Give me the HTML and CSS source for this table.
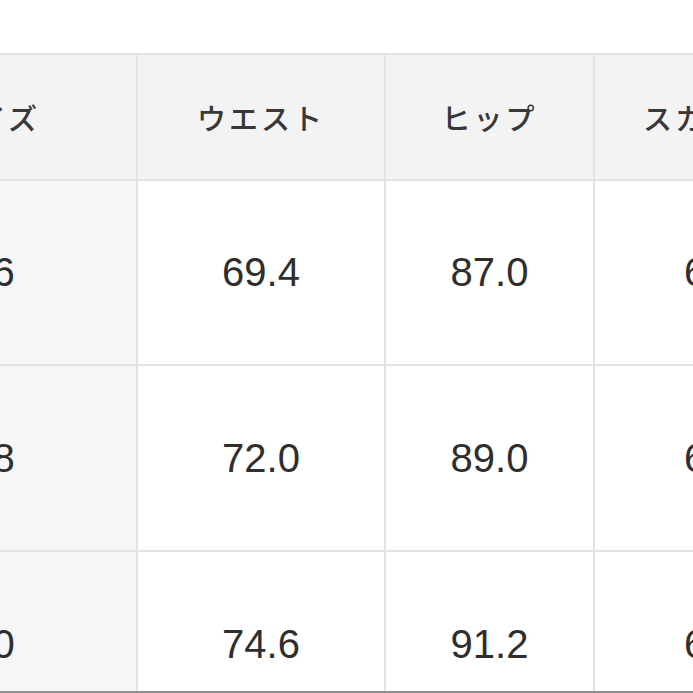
FILE: index.html
```html
<!DOCTYPE html>
<html lang="ja">
<head>
<meta charset="utf-8">
<title>サイズ表</title>
<link rel="stylesheet" href="styles.css">
</head>
<body>
<div class="page">
  <div class="size-table">
    <div class="cell head">サイズ</div>
    <div class="cell head">ウエスト</div>
    <div class="cell head">ヒップ</div>
    <div class="cell head">スカート丈</div>

    <div class="cell first num">36</div>
    <div class="cell num">69.4</div>
    <div class="cell num">87.0</div>
    <div class="cell num">60.0</div>

    <div class="cell first num">38</div>
    <div class="cell num">72.0</div>
    <div class="cell num">89.0</div>
    <div class="cell num">61.0</div>

    <div class="cell first num">40</div>
    <div class="cell num">74.6</div>
    <div class="cell num">91.2</div>
    <div class="cell num">62.0</div>
  </div>
</div>
</body>
</html>
```

FILE: styles.css
```css
html, body {
  margin: 0;
  padding: 0;
  background: #ffffff;
}

.page {
  width: 693px;
  height: 693px;
  overflow: hidden;
  box-sizing: border-box;
  border-bottom: 2px solid #8e8e8e;
  background: #ffffff;
}

.size-table {
  display: grid;
  grid-template-columns: 287px 246px 207px 256px;
  grid-template-rows: 124px 183px 184px 184px;
  gap: 2px;
  padding-top: 2px;
  margin-top: 53px;
  margin-left: -151px;
  width: max-content;
  background: #e3e3e5;
}

.cell {
  display: flex;
  align-items: center;
  justify-content: center;
  background: #ffffff;
}

.head {
  background: #f3f3f4;
  font-family: "Noto Sans CJK JP", "Noto Sans", sans-serif;
  font-size: 29px;
  font-weight: 500;
  letter-spacing: 3px;
  color: #383838;
}

.first {
  background: #f6f6f6;
}

.num {
  font-family: "Liberation Sans", Arial, sans-serif;
  font-size: 40px;
  color: #2e2e2e;
}
```
